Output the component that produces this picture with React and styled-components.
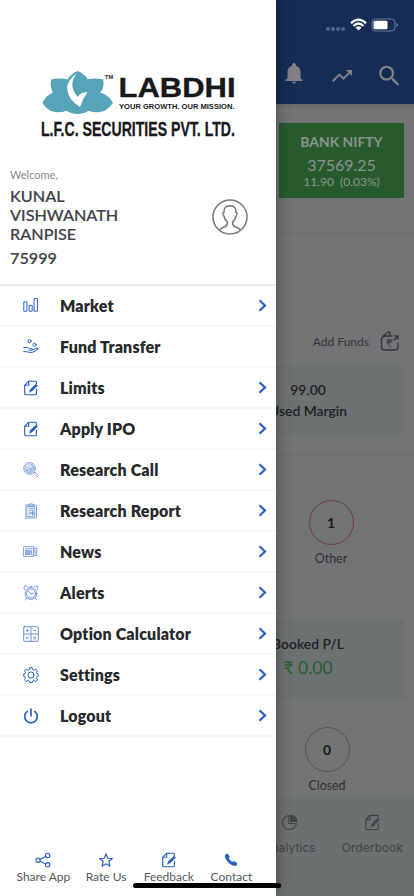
import React from 'react';
import styled, { createGlobalStyle } from 'styled-components';

const Global = createGlobalStyle`
  * { box-sizing: border-box; }
  body { margin: 0; font-family: Lato, sans-serif; background: #737476; }
`;

const Screen = styled.div`
  position: relative;
  width: 414px;
  height: 896px;
  overflow: hidden;
  background: #737476;
  color: #2c2d30;
`;

/* Dashboard behind the drawer */
const Dashboard = styled.main`
  display: flex;
  flex-direction: column;
  height: 896px;
`;
const Header = styled.header`
  height: 104px;
  background: #152d55;
  box-shadow: 0 1px 5px rgba(0, 0, 0, 0.15);
  display: flex;
  flex-direction: column;
  align-items: flex-end;
`;
const StatusBar = styled.div`
  display: flex;
  align-items: center;
  height: 50px;
  padding-right: 16px;
`;
const HeaderActions = styled.div`
  display: flex;
  align-items: flex-start;
  gap: 24px;
  padding: 13px 13px 0 0;
`;
const ActionIcon = styled.svg`
  display: block;
  height: 24px;
  margin-top: ${p => p.$drop || 0}px;
  fill: #808184;
`;
const Band = styled.section`
  flex: none;
  height: ${p => p.$h}px;
  padding: ${p => p.$pad || '0 10px'};
  border-bottom: ${p => (p.$line ? '1px solid #6d6e70' : '0')};
`;
const IndexCard = styled.div`
  width: 125px;
  height: 75px;
  margin-left: auto;
  padding-top: 8px;
  background: #275b2e;
  color: #8c918d;
  display: flex;
  flex-direction: column;
  align-items: center;
`;
const IndexText = styled.div`
  font-size: ${p => p.$size}px;
  line-height: ${p => p.$lh}px;
  font-weight: ${p => (p.$bold ? 700 : 400)};
  white-space: pre;
`;
const AddFunds = styled.div`
  display: flex;
  align-items: center;
  justify-content: flex-end;
  gap: 11px;
  height: 50px;
  padding-right: 4px;
  font-size: 12px;
  color: #35363a;
`;
const Panel = styled.div`
  display: grid;
  grid-template-columns: 1fr 192px;
  height: ${p => p.$h}px;
  background: #6c7172;
  border-radius: 2px;
`;
const PanelCell = styled.div`
  grid-column: 2;
  display: flex;
  flex-direction: column;
  align-items: center;
  padding-top: ${p => p.$top}px;
  font-size: 13.9px;
  line-height: ${p => p.$lh}px;
  font-weight: 600;
  color: #202124;
`;
const Profit = styled.span`
  font-size: 17.5px;
  font-weight: 400;
  color: #265f2e;
`;
const Counter = styled.div`
  width: 80px;
  margin-top: ${p => p.$top || 0}px;
  margin-left: ${p => p.$left}px;
  display: flex;
  flex-direction: column;
  align-items: center;
  font-size: 12.4px;
  line-height: 16px;
  color: #303134;
`;
const Ring = styled.div`
  width: 45px;
  height: 45px;
  margin-bottom: 6px;
  border: 1px solid ${p => p.$color};
  border-radius: 50%;
  display: grid;
  place-items: center;
  font-size: 14px;
  font-weight: 700;
  color: #18191b;
`;
const TabBar = styled.nav`
  flex: 1;
  display: flex;
  justify-content: flex-end;
  background: #6b7071;
  color: #414446;
`;
const Tab = styled.div`
  width: 83px;
  padding-top: 15px;
  display: flex;
  flex-direction: column;
  align-items: center;
  gap: 9px;
  font: 11.7px/16px Inter, sans-serif;
  letter-spacing: 0.2px;
`;

/* Drawer */
const Drawer = styled.aside`
  position: absolute;
  inset: 0 auto 0 0;
  width: 276px;
  background: #fff;
  box-shadow: 0 0 14px rgba(0, 0, 0, 0.4);
  display: flex;
  flex-direction: column;
`;
const Brand = styled.div`
  height: 167px;
  padding: 66px 0 0 38px;
`;
const Profile = styled.div`
  height: 119px;
  padding: 0 28px 0 10px;
  border-bottom: 2px solid #e8eaed;
  display: flex;
  justify-content: space-between;
`;
const Welcome = styled.div`
  font-size: 11px;
  line-height: 16px;
  color: #82868c;
  margin-bottom: 3px;
`;
const UserName = styled.div`
  width: 130px;
  font-size: 16.2px;
  line-height: 19px;
  color: #414246;
  font-weight: 500;
  -webkit-text-stroke: 0.2px #414246;
  margin-bottom: ${p => p.$gap || 0}px;
`;
const Avatar = styled.div`
  padding-top: 32px;
`;
const Menu = styled.nav`
  flex: 1;
`;
const MenuRow = styled.div`
  height: 41px;
  border-bottom: 2px solid #f7f7f8;
  padding: 0 8px 0 20px;
  display: grid;
  grid-template-columns: 40px 1fr 10px;
  align-items: center;
  font-size: 16px;
  font-weight: 800;
  letter-spacing: 0.17px;
  font-variant-ligatures: none;
  color: #27282b;
`;
const IconSlot = styled.span`
  display: flex;
  width: 21px;
  justify-content: center;
  color: #2860c4;
  opacity: ${p => p.$o || 1};
`;
const Footer = styled.div`
  display: grid;
  grid-template-columns: repeat(4, 62.7px);
  height: 44px;
  padding-left: 12px;
`;
const FooterItem = styled.div`
  display: flex;
  flex-direction: column;
  align-items: center;
  font-size: 12px;
  line-height: 18px;
  color: #55575b;
  white-space: nowrap;
  svg { color: #2860c4; }
`;
const HomeIndicator = styled.div`
  position: absolute;
  left: 133px;
  top: 883px;
  width: 148px;
  height: 5px;
  border-radius: 3px;
  background: #000;
`;

const Icon = ({ size = 16, sw = 1, vb = 16, children }) => (
  <svg width={size} height={size} viewBox={`0 0 ${vb} ${vb}`} fill="none" stroke="currentColor"
    strokeWidth={sw} strokeLinecap="round" strokeLinejoin="round">{children}</svg>
);

const EditIcon = ({ size = 16 }) => (
  <Icon size={size} sw={1.15}>
    <path d="M13.400 9v4.700q0 1-1 1H2.700q-1 0-1-1V5.200l4-4h6.700q1 0 1 1v1.500M5.700 1.200v4h-4" />
    <path d="M6.500 12l.9-2.700 5.500-5.300 1.700 1.600-5.500 5.400z" fill="currentColor" strokeWidth=".5" />
  </Icon>
);
const Bars = () => <Icon><path d="M1.200 3.900h2.700v9.300H1.200zM6.500 7.400h2.700v5.800H6.500zM11.500.6h2.900v12.600h-2.900z" /></Icon>;
const Hand = () => (
  <Icon><circle cx="6.500" cy="2.200" r="1.600" /><circle cx="11.500" cy="5.700" r="1.600" />
    <path d="M.8 8.500h3.400l2.500 1.200h2.600q1.200.8-.1 1.500H6M10 10.700l3.800-1.500q1.600-.2 1.300.8-2.800 2.500-5.700 3.300-2.800.6-5.800-.6H.8" /></Icon>
);
const Research = () => (
  <Icon sw={0.85}><circle cx="6.600" cy="6.500" r="6" /><circle cx="6.600" cy="6.500" r="4.700" />
    <path d="M3.200 9V7h1.400v3.500M6 10.700V6h1.400v4.700M8.800 10V4.700h1.300v4M3.200 5.700l3-1.300 3-2M11 11l1-1 3.400 3.500-1 1z" /></Icon>
);
const Report = () => (
  <Icon sw={0.9}><path d="M2.500 2h11v13h-11zM4.200 3.600h7.600v9.800H4.200zM5.500 2.800V1.200h1.600q1-1.400 2 0h1.500v1.600zM5.800 5.400h4.600M5.800 7.300h4.600M5.800 9.200h2M5.800 11h2" />
    <path d="M9.800 8.500v3.400M8.200 10.200h3.200" strokeWidth="1.300" /></Icon>
);
const News = () => (
  <Icon size={15} sw={0.9}><path d="M1 2.800h10.500v10.400H1zM11.500 5h2v-.8h1.200v8h-3.200zM3 5h6.800M2.800 11.300h7M13 6.800v3.500" />
    <path d="M3 7h2.400v3H3zM7 7v3M8.800 6.800V10" strokeWidth="1.300" /></Icon>
);
const Alarm = () => (
  <Icon sw={0.9}><circle cx="8" cy="8.500" r="5.900" /><circle cx="8" cy="8.500" r="4.500" />
    <path d="M5.300 6.400L8 8.700l2.500-.5M1.600 4.700Q-.2 2.200 1.800 1 4 .2 4.800 2.100M14.400 4.700q1.800-2.500-.2-3.700-2.200-.8-3 1.100M3.800 13L2.300 15M12.200 13l1.500 2M7 1.700h2" /></Icon>
);
const Calc = () => (
  <Icon sw={0.9}><rect x=".7" y=".7" width="14.600" height="14.600" rx=".8" /><path d="M8 .7v14.600M.7 8h14.600" />
    <path d="M3.400 4.500h2M4.400 3.500v2M10.700 4.500h2M3.500 11l1.700 1.700M5.200 11l-1.700 1.700M10.700 11h2M10.700 12.800h2" /></Icon>
);
const Gear = () => (
  <Icon><circle cx="8" cy="8" r="3.100" />
    <path d="M6.800.7h2.400l.5 1.900 1.400.6 1.700-1 1.700 1.700-1 1.700.6 1.300 1.200.3v2l-1.200.4-.6 1.500 1 1.700-1.700 1.700-1.700-1-1.400.6-.5 1.300H6.800l-.5-1.300-1.400-.6-1.700 1-1.700-1.700 1-1.700-.6-1.500-1.200-.4v-2l1.200-.3.6-1.300-1-1.700 1.700-1.700 1.700 1 1.400-.6z" /></Icon>
);
const Power = () => <Icon sw={1.7}><path d="M4.300 3.400a6.300 6.300 0 1 0 7.400 0M8 1v6.800" /></Icon>;
const Chevron = () => (
  <svg width="9" height="13" viewBox="0 0 9 13" fill="none" stroke="#2860c4" strokeWidth="2.200"><path d="M1.500 1.200l5.500 5.300-5.500 5.300" /></svg>
);
const Share = () => (
  <Icon sw={1.1}><circle cx="3" cy="8.200" r="2.200" /><circle cx="12.700" cy="3.500" r="2.200" /><circle cx="12.700" cy="12.800" r="2.200" /><path d="M5 7.200l5.700-2.700M5 9.200l5.700 2.700" /></Icon>
);
const Star = () => <Icon sw={1.1}><path d="M8 1.800l1.700 4.400 4.700.3-3.600 3 1.200 4.800L8 11.700l-4 2.600 1.200-4.800-3.600-3 4.700-.3z" /></Icon>;
const Phone = () => (
  <Icon><path d="M2.700 2.200l2.100-.7 1.900 3.200-1 1.600q1 2.400 3.600 3.700l1.600-1 3.300 1.900-.5 2.300q-1.200 1.400-4 .3Q3.700 10.600 1.900 4.700q-.1-1.600.8-2.500z" fill="currentColor" stroke="none" /></Icon>
);

const Logo = () => (
  <svg width="204" height="76" viewBox="0 0 204 76">
    <g fill="#57a4b8">
      <path d="M39.700 5Q45 7 49.500 12.500L43 46 36 46 30 12.500Q34 7 39.700 5z" />
      <path d="M13 13.500Q21 11.300 31 13.500L33 40 15 27Q12 22 13 13.500z" />
      <path d="M65.300 13.500Q57 11.300 48 13.500L46 40 62 27Q66.500 22 65.300 13.500z" />
      <path d="M4.300 36.700Q9 28.500 15 26.500Q30 24 38 44Q31 44 28 45Q21 47.500 13 45Q8 42.500 4.300 36.700z" />
      <path d="M75 36.700Q70 28.500 62 26.500Q49 24 41 44Q48 44 51 45Q58 47.500 66 45Q71 42.500 75 36.700z" />
      <path d="M28 14H51V40L52 44Q46 48 39.700 48 33 48 27 44L28 40z" />
    </g>
    <path d="M38.500 7.500Q28 15 29.300 24Q30.500 34 42 41Q44.500 33 49.500 26.300Q42 26 40 31Q29.500 20 38.500 7.500z" fill="#fff" />
    <g fill="#19191b" stroke="#19191b" fontFamily="Liberation Sans" fontWeight="700">
      <text x="67" y="13" fontSize="5.500" strokeWidth="0" textLength="8" lengthAdjust="spacingAndGlyphs">TM</text>
      <text x="80.500" y="30.500" fontSize="28.500" strokeWidth=".4" textLength="117" lengthAdjust="spacingAndGlyphs">LABDHI</text>
      <text x="81" y="42.700" fontSize="7.500" strokeWidth="0" textLength="115.500" lengthAdjust="spacingAndGlyphs">YOUR GROWTH. OUR MISSION.</text>
      <text transform="translate(3 69.500) scale(.72 1)" fontSize="19.500" strokeWidth=".3" textLength="269.400" lengthAdjust="spacingAndGlyphs">L.F.C. SECURITIES PVT. LTD.</text>
    </g>
  </svg>
);

const MENU = [
  ['Market', Bars], ['Fund Transfer', Hand, 1, true], ['Limits', EditIcon], ['Apply IPO', EditIcon],
  ['Research Call', Research, 0.6], ['Research Report', Report, 0.65], ['News', News, 0.65],
  ['Alerts', Alarm, 0.7], ['Option Calculator', Calc, 0.75], ['Settings', Gear], ['Logout', Power],
];
const FOOTER = [['Share App', Share], ['Rate Us', Star], ['Feedback', EditIcon], ['Contact', Phone]];

export default function App() {
  return (
    <Screen>
      <Global />
      <Dashboard>
        <Header>
          <StatusBar>
            <svg width="72" height="16" viewBox="0 0 72 16">
              <g fill="#4d648a"><circle cx="2" cy="12" r="2" /><circle cx="7" cy="12" r="2" /><circle cx="12" cy="12" r="2" /><circle cx="17" cy="12" r="2" /></g>
              <g fill="none" stroke="#fff" strokeWidth="2.300"><path d="M25 6.300Q32.500-1 40 6.300M27.500 9Q32.500 4 37.500 9" /></g>
              <path d="M29.500 10.600q3-2.500 6 0l-3 3z" fill="#fff" />
              <rect x="46" y="2" width="23" height="12" rx="3.500" fill="none" stroke="#697c9b" />
              <rect x="47.500" y="3.700" width="14" height="8.600" rx="1.500" fill="#fff" />
              <path d="M70.500 6v4q1.500-.5 1.500-2t-1.500-2" fill="#697c9b" />
            </svg>
          </StatusBar>
          <HeaderActions>
            <ActionIcon width="24" viewBox="0 0 24 24"><path d="M12 20.500q2 0 2-1.700h-4Q10 20.500 12 20.500zM18.500 15v-6q0-5-4.500-6.300V1.500Q13.500 0 12 0T10 1.500v1.200Q5.500 4 5.500 9v6l-2 2v1h17v-1z" /></ActionIcon>
            <ActionIcon width="24" viewBox="0 0 24 24" $drop={1}><path d="M16 6l2.290 2.290-4.880 4.880-4-4L2 16.590 3.410 18l6-6 4 4 6.300-6.290L22 12V6z" /></ActionIcon>
            <ActionIcon width="23" viewBox="2 2 20 20" $drop={1}><path d="M15.500 14h-.79l-.28-.27A6.470 6.470 0 0 0 16 9.500 6.500 6.500 0 1 0 9.500 16c1.610 0 3.090-.59 4.230-1.570l.27.28v.79l5 4.990L20.490 19l-4.990-5zm-6 0C7.010 14 5 11.990 5 9.500S7.010 5 9.500 5 14 7.010 14 9.500 11.990 14 9.500 14z" /></ActionIcon>
          </HeaderActions>
        </Header>
        <Band $h={130} $line $pad="19px 10px 0">
          <IndexCard>
            <IndexText $size={13.9} $lh={22} $bold>BANK NIFTY</IndexText>
            <IndexText $size={16} $lh={24}>37569.25</IndexText>
            <IndexText $size={12} $lh={10}>11.90  (0.03%)</IndexText>
          </IndexCard>
        </Band>
        <Band $h={82} $line />
        <Band $h={139} $line>
          <AddFunds>Add Funds
            <Icon size={20} vb={20} sw={1.4}>
              <path d="M12 5H5.500q-4 .2-4 4v7q0 3 3 3H15q3 0 3-3v-3.500M3 5l5.500-4q1-.5 1.500.5v3.500M14 9l3.500-3.500M14.500 5H18v3.500" />
              <path d="M7 9h5M7 11h5M8 9q3 0 2.500 2-1 1.500-3 1l3 4" strokeWidth="1" />
            </Icon>
          </AddFunds>
          <Panel $h={68}><PanelCell $top={13} $lh={21}><span>99.00</span><span>Used Margin</span></PanelCell></Panel>
        </Band>
        <Band $h={118} $line $pad="45px 0 0">
          <Counter $left={291}><Ring $color="#773c38">1</Ring>Other</Counter>
        </Band>
        <Band $h={226} $pad="47px 10px 0">
          <Panel $h={79}><PanelCell $top={12} $lh={24}><span>Booked P/L</span><Profit>₹ 0.00</Profit></PanelCell></Panel>
          <Counter $left={277} $top={28}><Ring $color="#535759">0</Ring>Closed</Counter>
        </Band>
        <TabBar>
          <Tab><Icon size={17} sw={1}><path d="M7.300 1.500A6.600 6.600 0 1 0 14.500 9H7.300z" /><path d="M9 1.300V7h6Q14.500 2 9 1.300z" fill="currentColor" /></Icon>Analytics</Tab>
          <Tab><EditIcon size={17} />Orderbook</Tab>
        </TabBar>
      </Dashboard>

      <Drawer>
        <Brand><Logo /></Brand>
        <Profile>
          <div>
            <Welcome>Welcome,</Welcome>
            <UserName $gap={5}>KUNAL VISHWANATH RANPISE</UserName>
            <UserName>75999</UserName>
          </div>
          <Avatar>
            <svg width="36" height="36" viewBox="0 0 36 36" fill="none" stroke="#77787b" strokeWidth="1.500">
              <circle cx="18" cy="18" r="17" />
              <path d="M8 31q.5-2 5.500-3.500 2.300-1.200 1.700-5-2.700-1.500-3-5-1.700-1-1.200-3.500l1-.7q-.5-6.300 6-6.500 6.500.2 6 6.500l1 .7q.5 2.500-1.200 3.500-.3 3.500-3 5-.6 3.800 1.700 5 5 1.500 5.500 3.500" />
            </svg>
          </Avatar>
        </Profile>
        <Menu>
          {MENU.map(([label, Glyph, o, leaf]) => (
            <MenuRow key={label}>
              <IconSlot $o={o}><Glyph /></IconSlot>
              <span>{label}</span>
              {!leaf && <Chevron />}
            </MenuRow>
          ))}
        </Menu>
        <Footer>
          {FOOTER.map(([label, Glyph]) => <FooterItem key={label}><Glyph />{label}</FooterItem>)}
        </Footer>
      </Drawer>
      <HomeIndicator />
    </Screen>
  );
}
